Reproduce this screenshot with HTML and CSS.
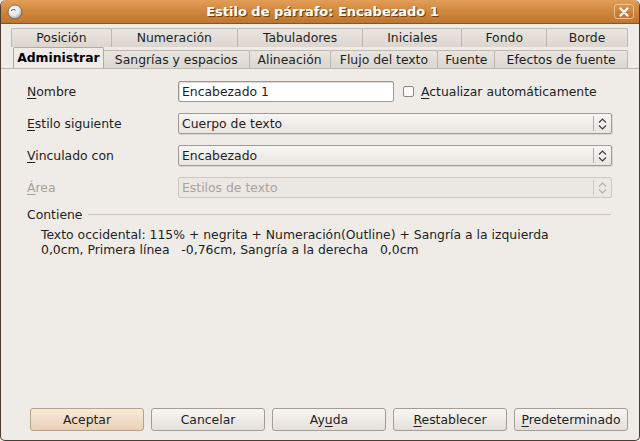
FILE: index.html
```html
<!DOCTYPE html>
<html lang="es">
<head>
    <meta charset="UTF-8">
    <title>Estilo de párrafo: Encabezado 1</title>
    <link rel="stylesheet" href="styles.css">
</head>
<body>

<div class="window">
    <div class="titlebar">
        <svg class="app-icon" width="16" height="16" viewBox="0 0 16 16">
            <defs>
                <radialGradient id="ball" cx="0.4" cy="0.35" r="0.7">
                    <stop offset="0" stop-color="#ffffff"/>
                    <stop offset="0.6" stop-color="#e4e4e4"/>
                    <stop offset="1" stop-color="#8d8d8d"/>
                </radialGradient>
            </defs>
            <circle cx="8" cy="8" r="7" fill="url(#ball)" stroke="#6f5a44" stroke-width="0.8"/>
            <path d="M4 6.5 Q6 5 8.5 6" stroke="#555" stroke-width="1" fill="none"/>
        </svg>
        <div class="title">Estilo de párrafo: Encabezado 1</div>
        <div class="close-btn">
            <svg width="10" height="10" viewBox="0 0 10 10">
                <path d="M1.5 1.5 L8.5 8.5 M8.5 1.5 L1.5 8.5" stroke="#ffffff" stroke-width="2.2" stroke-linecap="round"/>
            </svg>
        </div>
    </div>

    <div class="content">
        <div class="tabs">
            <div class="tab-row row-back">
                <div class="tab">Posición</div>
                <div class="tab">Numeración</div>
                <div class="tab">Tabuladores</div>
                <div class="tab">Iniciales</div>
                <div class="tab">Fondo</div>
                <div class="tab">Borde</div>
            </div>
            <div class="tab-row row-front">
                <div class="tab active">Administrar</div>
                <div class="tab">Sangrías y espacios</div>
                <div class="tab">Alineación</div>
                <div class="tab">Flujo del texto</div>
                <div class="tab">Fuente</div>
                <div class="tab">Efectos de fuente</div>
            </div>
        </div>

        <div class="panel">
            <div class="form">
                <label class="lbl"><u>N</u>ombre</label>
                <div class="name-row">
                    <div class="entry">Encabezado 1</div>
                    <div class="check"><span class="box"></span><span><u>A</u>ctualizar automáticamente</span></div>
                </div>

                <label class="lbl"><u>E</u>stilo siguiente</label>
                <div class="combo">
                    <span class="combo-text">Cuerpo de texto</span>
                    <span class="combo-arrow">
                        <svg width="9" height="12" viewBox="0 0 9 12"><path d="M1 4.5 L4.5 1 L8 4.5 M1 7.5 L4.5 11 L8 7.5" stroke="#3c3c3c" stroke-width="1.1" fill="none"/></svg>
                    </span>
                </div>

                <label class="lbl"><u>V</u>inculado con</label>
                <div class="combo">
                    <span class="combo-text">Encabezado</span>
                    <span class="combo-arrow">
                        <svg width="9" height="12" viewBox="0 0 9 12"><path d="M1 4.5 L4.5 1 L8 4.5 M1 7.5 L4.5 11 L8 7.5" stroke="#3c3c3c" stroke-width="1.1" fill="none"/></svg>
                    </span>
                </div>

                <label class="lbl disabled"><u>Á</u>rea</label>
                <div class="combo disabled">
                    <span class="combo-text">Estilos de texto</span>
                    <span class="combo-arrow">
                        <svg width="9" height="12" viewBox="0 0 9 12"><path d="M1 4.5 L4.5 1 L8 4.5 M1 7.5 L4.5 11 L8 7.5" stroke="#b5afa8" stroke-width="1.1" fill="none"/></svg>
                    </span>
                </div>
            </div>

            <div class="section-head">
                <span>Contiene</span>
                <span class="rule"></span>
            </div>
            <div class="contains">
                Texto occidental: 115% + negrita + Numeración(Outline) + Sangría a la izquierda<br>
                0,0cm, Primera línea &nbsp; -0,76cm, Sangría a la derecha &nbsp; 0,0cm
            </div>
        </div>

        <div class="buttons">
            <button class="btn btn-default">Aceptar</button>
            <button class="btn">Cancelar</button>
            <button class="btn">Ay<u>u</u>da</button>
            <button class="btn"><u>R</u>establecer</button>
            <button class="btn"><u>P</u>redeterminado</button>
        </div>
    </div>
</div>

</body>
</html>
```

FILE: styles.css
```css
body {
    margin: 0;
    background: #efebe7;
    font-family: "DejaVu Sans", sans-serif;
    font-size: 12.4px;
    color: #1e1e1e;
}
.window {
    width: 640px;
    height: 441px;
    box-sizing: border-box;
    display: flex;
    flex-direction: column;
    background: #efebe7;
    border: 1px solid #4a3c2e;
    border-top: none;
    border-radius: 6px 6px 5px 5px;
    overflow: hidden;
}
.titlebar {
    height: 23px;
    flex: none;
    display: flex;
    align-items: center;
    background: linear-gradient(#e29e58, #d0863c 50%, #c0762c);
    border-bottom: 1px solid #8a5520;
}
.app-icon {
    margin-left: 6px;
    flex: none;
}
.title {
    flex: 1;
    text-align: center;
    color: #ffffff;
    font-weight: bold;
    font-size: 13px;
    text-shadow: 1px 1px 0 #6e3f10;
    margin-left: 8px;
}
.close-btn {
    width: 20px;
    height: 15px;
    margin-right: 5px;
    box-sizing: border-box;
    border: 1px solid #f0c08c;
    border-radius: 3px;
    background: linear-gradient(#d79550, #bd7430);
    display: flex;
    align-items: center;
    justify-content: center;
}
.content {
    flex: 1;
    display: flex;
    flex-direction: column;
}
.tabs {
    padding: 4px 12px 0 10px;
}
.tab-row {
    display: flex;
}
.tab {
    height: 18px;
    box-sizing: border-box;
    border: 1px solid #bfb8b0;
    border-bottom: none;
    background: linear-gradient(#e9e5e0, #dcd6cf);
    text-align: center;
    line-height: 17px;
    color: #1e1e1e;
    border-radius: 2px 2px 0 0;
    margin-right: -1px;
}
.row-back .tab {
    height: 19px;
}
.row-back .tab:nth-child(1) { width: 101px; }
.row-back .tab:nth-child(2) { width: 127px; }
.row-back .tab:nth-child(3) { width: 127px; }
.row-back .tab:nth-child(4) { width: 100px; }
.row-back .tab:nth-child(5) { width: 86px; }
.row-back .tab:nth-child(6) { width: 82px; }
.row-front {
    align-items: flex-end;
    height: 21px;
    padding-left: 2px;
}
.row-front .tab:nth-child(2) { width: 147px; }
.row-front .tab:nth-child(3) { width: 82px; }
.row-front .tab:nth-child(4) { width: 109px; }
.row-front .tab:nth-child(5) { width: 58px; }
.row-front .tab:nth-child(6) { width: 134px; }
.tab.active {
    width: 91px;
    height: 21px;
    background: #efebe7;
    font-weight: bold;
    color: #000;
    border-color: #b1aaa2;
    line-height: 20px;
    position: relative;
    z-index: 1;
}
.panel {
    flex: 1;
    padding: 12px 28px 0 26px;
    border-top: 1px solid #bfb8b0;
}
.form {
    display: grid;
    grid-template-columns: 151px 1fr;
    grid-auto-rows: 21px;
    row-gap: 11px;
    align-items: center;
}
.lbl {
    line-height: 21px;
}
.lbl u, .btn u, .check u {
    text-decoration-thickness: 1px;
    text-underline-offset: 2px;
}
.disabled {
    color: #aaa39b;
}
.name-row {
    display: flex;
    align-items: center;
}
.entry {
    width: 216px;
    height: 21px;
    box-sizing: border-box;
    background: #ffffff;
    border: 1px solid #a09990;
    border-radius: 2px;
    box-shadow: inset 1px 1px 0 #dcd8d3;
    padding-left: 3px;
    line-height: 19px;
}
.check {
    display: flex;
    align-items: center;
    margin-left: 9px;
}
.check .box {
    width: 11px;
    height: 11px;
    box-sizing: border-box;
    border: 1px solid #8e8780;
    border-radius: 2px;
    background: #fbfaf9;
    margin-right: 7px;
}
.combo {
    width: 434px;
    height: 21px;
    box-sizing: border-box;
    border: 1px solid #a29a92;
    border-radius: 2px;
    background: linear-gradient(#f7f5f3, #e9e5e0);
    display: flex;
    align-items: center;
    box-shadow: 1px 1px 0 #d9d4ce;
}
.combo-text {
    flex: 1;
    padding-left: 3px;
}
.combo-arrow {
    width: 16px;
    height: 15px;
    border-left: 1px solid #b3aca4;
    display: flex;
    align-items: center;
    justify-content: center;
    margin-right: 1px;
}
.combo.disabled {
    border-color: #cdc7c0;
    background: #ebe7e2;
    box-shadow: none;
}
.combo.disabled .combo-arrow {
    border-left-color: #cfc9c2;
}
.section-head {
    display: flex;
    align-items: center;
    margin-top: 8px;
    height: 16px;
}
.section-head .rule {
    flex: 1;
    height: 1px;
    background: #c8c2bb;
    margin-left: 5px;
}
.contains {
    margin-top: 5px;
    padding-left: 14px;
    line-height: 15px;
}
.buttons {
    display: flex;
    gap: 7px;
    padding: 0 0 9px 29px;
}
.btn {
    width: 114px;
    height: 23px;
    font-family: "DejaVu Sans", sans-serif;
    font-size: 12.4px;
    color: #1e1e1e;
    border: 1px solid #a49d95;
    border-radius: 3px;
    background: linear-gradient(#f8f6f4, #e4dfd9);
    padding: 0;
}
.btn-default {
    background: linear-gradient(#f8eadb, #ead2b6);
    border-color: #b7a38d;
}
```
